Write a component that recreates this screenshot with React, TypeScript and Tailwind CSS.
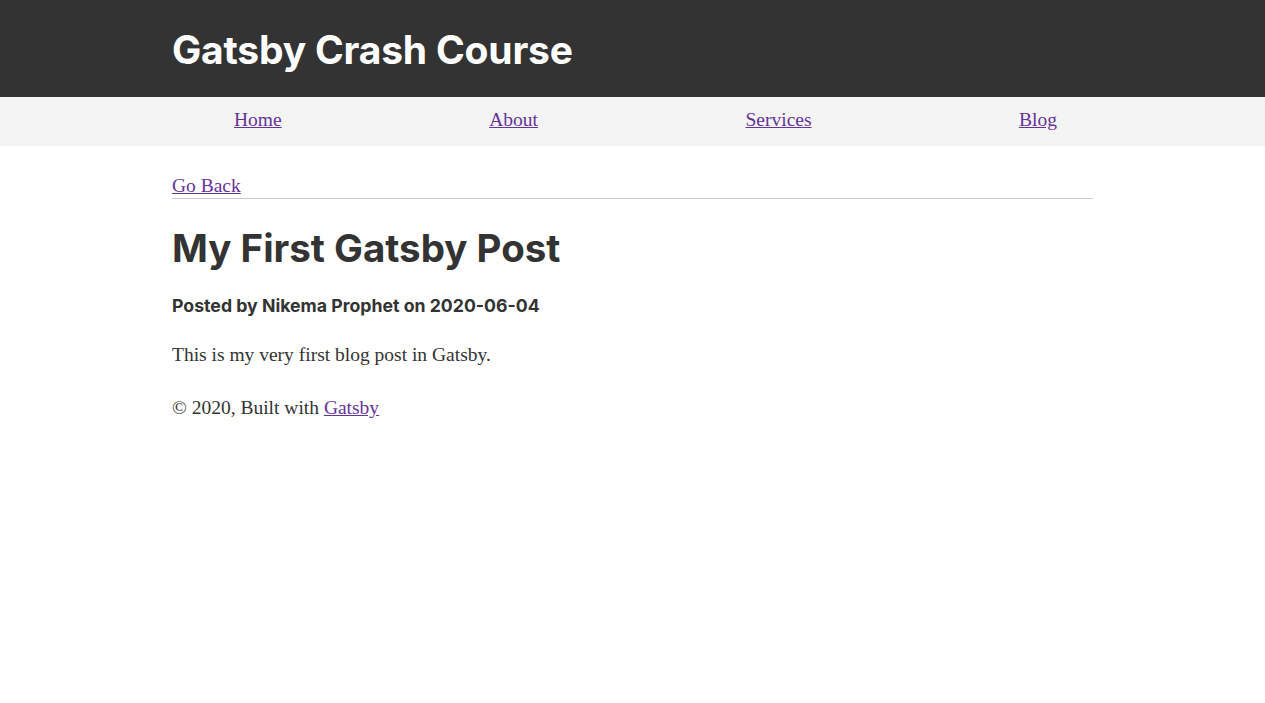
import React from 'react';

const serif = "font-['Liberation_Serif',Georgia,serif]";
const sans = "font-['Inter','Noto_Sans',sans-serif]";

const links = ['Home', 'About', 'Services', 'Blog'];

export default function App() {
  return (
    <div className={`min-h-screen bg-white text-[#333] ${serif}`}>
      {/* Header */}
      <header className="bg-[#333] h-[97px]">
        <div className="w-[921px] mx-auto pt-[22px]">
          <h1 className={`${sans} text-white text-[39px] font-bold leading-[56px] tracking-[-0.2px]`}>
            Gatsby Crash Course
          </h1>
        </div>
      </header>

      {/* Nav */}
      <nav className="bg-[#f4f4f4] h-[49px]">
        <ul className="w-[921px] mx-auto flex justify-between items-center h-full pl-[62px] pr-[36px] pb-[4px]">
          {links.map((l) => (
            <li key={l}>
              <a href="#" className="text-[#663399] underline text-[19.5px] leading-[26px]">
                {l}
              </a>
            </li>
          ))}
        </ul>
      </nav>

      {/* Post */}
      <main className="w-[921px] mx-auto pt-[27px]">
        <a href="#" className="text-[#663399] underline text-[19.5px] leading-[26px]">
          Go Back
        </a>
        <hr className="border-0 h-px bg-[#ccc] mt-[-1px]" />
        <h1 className={`${sans} text-[38.5px] font-bold leading-[48px] mt-[25px] text-[#333]`}>
          My First Gatsby Post
        </h1>
        <h4 className={`${sans} text-[17.7px] font-bold leading-[24px] mt-[22px]`}>
          Posted by Nikema Prophet on 2020-06-04
        </h4>
        <p className="text-[19.5px] leading-[27px] mt-[23px]">
          This is my very first blog post in Gatsby.
        </p>
        <footer className="text-[19.5px] leading-[27px] mt-[26px]">
          © 2020, Built with{' '}
          <a href="#" className="text-[#663399] underline">
            Gatsby
          </a>
        </footer>
      </main>
    </div>
  );
}
